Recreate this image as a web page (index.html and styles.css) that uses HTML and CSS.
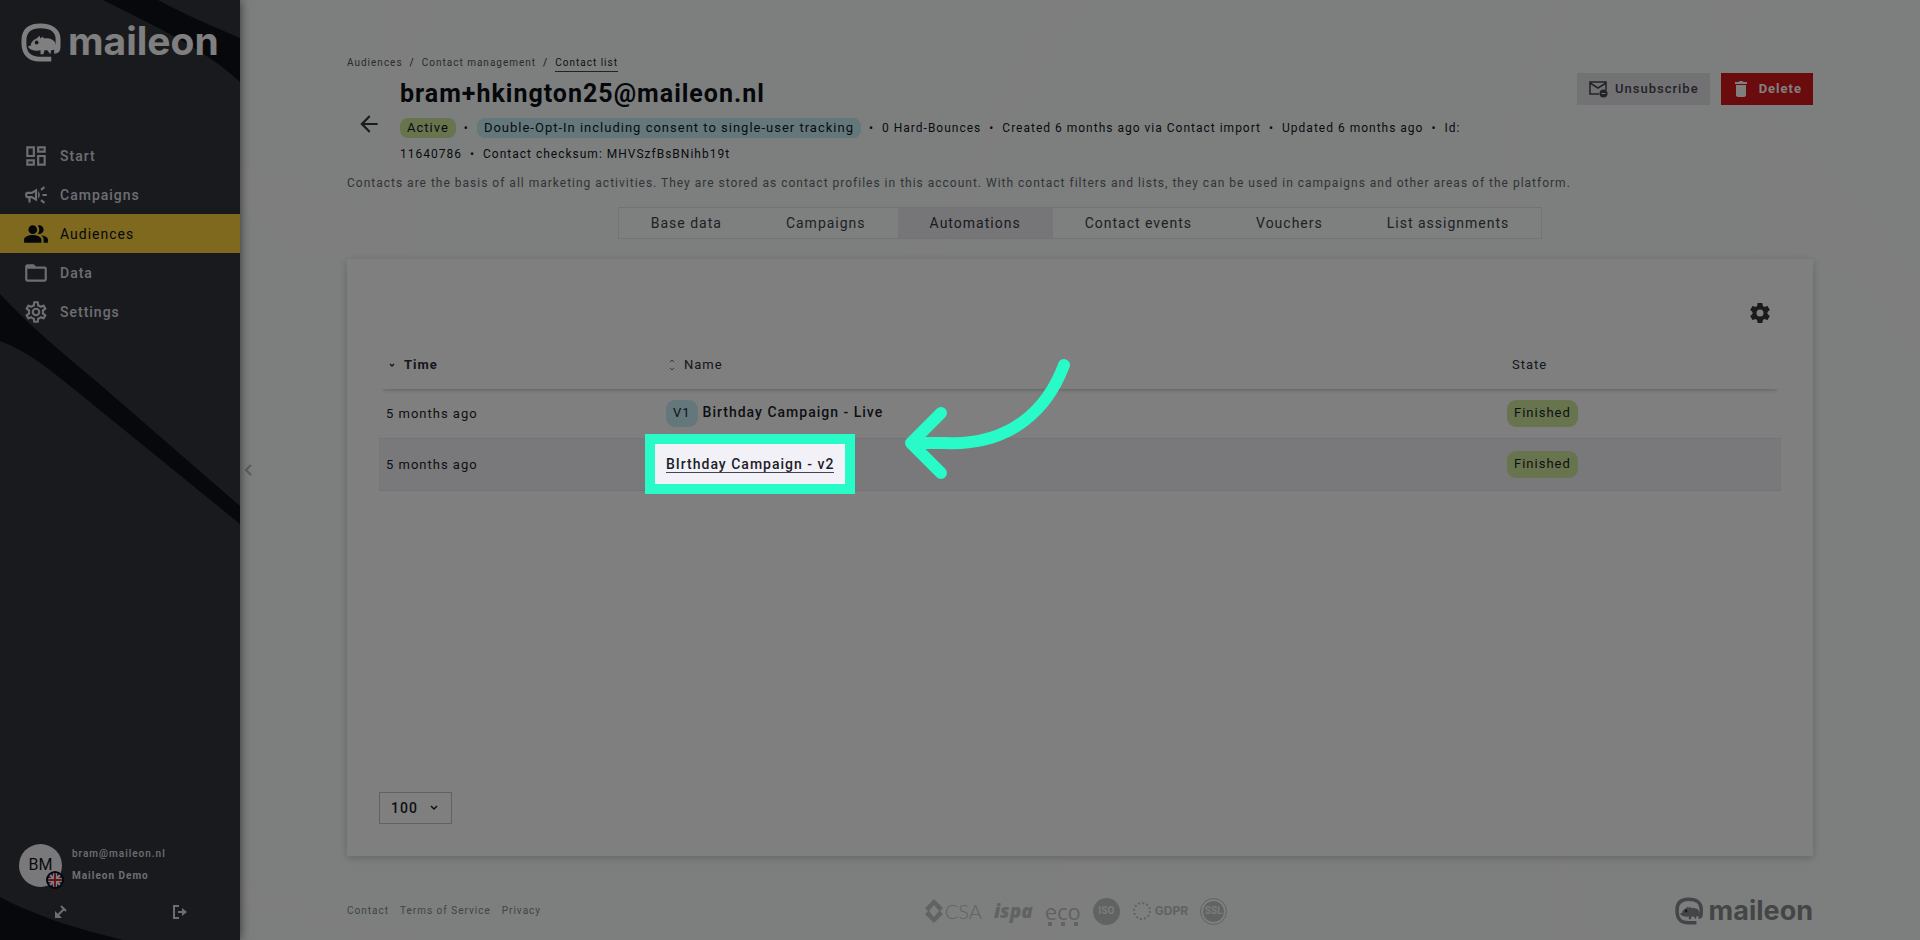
FILE: index.html
```html
<!DOCTYPE html>
<html lang="en">
<head>
<meta charset="utf-8">
<meta name="viewport" content="width=device-width, initial-scale=1">
<title>Contact automations - Maileon</title>
<link rel="stylesheet" href="styles.css">
</head>
<body>
<svg class="sprite" aria-hidden="true">
  <symbol id="chameleon" viewBox="0 0 42 40">
    <path d="M31 37H19C8 37 3 30 3 21v-3C3 8 9 3 20 3s18 5 18 14v7c0 3-1 5-4 5" fill="none" stroke="currentColor" stroke-width="5"/>
    <path d="M10 23c0-3 3-6 6-7l3-3 1 3 2-2 2 2c5-1 9 1 11 4l2 7-6 1-1 4-3-4h-3l-1 4-3 0 0-4c-4 1-11 0-13-4z" fill="currentColor"/>
    <circle class="eye" cx="16" cy="20" r="2"/>
  </symbol>
</svg>
<div class="app">
  <aside class="sidebar">
    <svg class="sidebar-art" viewBox="0 0 240 940" preserveAspectRatio="none" aria-hidden="true">
      <path d="M103 0h55c28 15 54 26 82 38v44C204 48 150 24 103 0z"/>
      <path d="M0 294c30 32 62 59 96 87l144 125v18L80 394C50 370 28 351 0 341z"/>
      <path d="M0 897c38 20 78 32 123 43H0z"/>
    </svg>
    <a class="logo" href="#" aria-label="maileon"><svg class="logo-mark" aria-hidden="true"><use href="#chameleon"/></svg><span class="logo-text">maileon</span></a>
    <nav class="nav" aria-label="Main">
      <a class="nav-item" href="#"><svg class="icon" viewBox="0 0 24 24"><path d="M19 5v2h-4V5h4M9 5v6H5V5h4m10 8v6h-4v-6h4M9 17v2H5v-2h4M21 3h-8v6h8V3zM11 3H3v10h8V3zm10 8h-8v10h8V11zm-10 4H3v6h8v-6z"/></svg>Start</a>
      <a class="nav-item" href="#"><svg class="icon" viewBox="0 0 24 24"><path d="M18 11v2h4v-2h-4zM16 17.61l3.200 2.390 1.200-1.600-3.200-2.400-1.200 1.610zM20.400 5.600L19.200 4 16 6.400 17.200 8l3.200-2.400zM4 9c-1.100 0-2 .9-2 2v2c0 1.100.9 2 2 2h1v4h2v-4h1l5 3V6L8 9H4zm5.030 1.710L11 9.530v4.940l-1.970-1.180-.48-.29H4v-2h4.550l.48-.29zM15.500 12c0-1.330-.58-2.530-1.500-3.350v6.690c.92-.81 1.500-2.010 1.500-3.340z"/></svg>Campaigns</a>
      <a class="nav-item nav-item-active" href="#" aria-current="page"><svg class="icon" viewBox="0 0 24 24"><path d="M16.670 13.130C18.040 14.060 19 15.320 19 17v3h4v-3c0-2.180-3.570-3.470-6.330-3.870zM15 12c2.210 0 4-1.790 4-4s-1.790-4-4-4c-.47 0-.91.1-1.330.24C14.500 5.270 15 6.580 15 8s-.5 2.730-1.330 3.760c.42.14.86.24 1.330.24zM9 12a4 4 0 1 0 0-8 4 4 0 0 0 0 8zm0 1c-2.670 0-8 1.340-8 4v3h16v-3c0-2.660-5.330-4-8-4z"/></svg>Audiences</a>
      <a class="nav-item" href="#"><svg class="icon" viewBox="0 0 24 24"><path d="M20 18H4V8h16m0-2h-8l-2-2H4c-1.110 0-2 .89-2 2v12a2 2 0 0 0 2 2h16a2 2 0 0 0 2-2V8a2 2 0 0 0-2-2z"/></svg>Data</a>
      <a class="nav-item" href="#"><svg class="icon" viewBox="0 0 24 24"><path d="M12 8a4 4 0 0 1 4 4 4 4 0 0 1-4 4 4 4 0 0 1-4-4 4 4 0 0 1 4-4m0 2a2 2 0 0 0-2 2 2 2 0 0 0 2 2 2 2 0 0 0 2-2 2 2 0 0 0-2-2m-2 12c-.25 0-.46-.18-.5-.42l-.37-2.650c-.63-.25-1.170-.59-1.690-.99l-2.490 1.010c-.22.08-.49 0-.61-.22l-2-3.460a.493.493 0 0 1 .12-.64l2.110-1.660L4.500 12l.07-1-2.110-1.630a.493.493 0 0 1-.12-.64l2-3.460c.12-.22.39-.31.61-.22l2.490 1c.52-.39 1.060-.73 1.690-.98l.37-2.650c.04-.24.25-.42.5-.42h4c.25 0 .46.18.5.42l.37 2.650c.63.25 1.170.59 1.690.98l2.490-1c.22-.09.49 0 .61.22l2 3.460c.13.22.07.49-.12.64L19.430 11l.07 1-.07 1 2.110 1.630c.19.15.25.42.12.64l-2 3.460c-.12.22-.39.31-.61.22l-2.490-1c-.52.39-1.060.73-1.690.98l-.37 2.650c-.04.24-.25.42-.5.42h-4m1.250-18l-.37 2.610c-1.200.25-2.260.89-3.030 1.780L5.440 7.350l-.75 1.300L6.800 10.200a5.550 5.550 0 0 0 0 3.600l-2.120 1.560.75 1.300 2.430-1.040c.77.88 1.820 1.520 3.010 1.760l.37 2.620h1.520l.37-2.610c1.190-.25 2.240-.89 3.010-1.770l2.430 1.040.75-1.300-2.120-1.550c.4-1.170.4-2.440 0-3.610l2.110-1.550-.75-1.300-2.410 1.040a5.420 5.420 0 0 0-3.030-1.770L12.750 4h-1.500z"/></svg>Settings</a>
    </nav>
    <div class="account">
      <div class="user">
        <div class="avatar">BM
          <svg class="flag" viewBox="0 0 18 18" role="img" aria-label="English"><circle class="flag-rim" cx="9" cy="9" r="9"/><clipPath id="flag-clip"><circle cx="9" cy="9" r="7"/></clipPath><g clip-path="url(#flag-clip)"><path fill="#3c4c9c" d="M0 0h18v18H0z"/><path stroke="#fff" stroke-width="2" d="M2 2l14 14M16 2L2 16"/><path stroke="#fff" stroke-width="4" d="M9 0v18M0 9h18"/><path stroke="#e0232f" stroke-width="2" d="M9 0v18M0 9h18"/></g></svg>
        </div>
        <div class="user-lines"><span>bram@maileon.nl</span><strong>Maileon Demo</strong></div>
      </div>
      <div class="account-actions">
        <button class="icon-button" type="button" aria-label="Switch account"><svg class="icon-small" viewBox="0 0 14 14"><path d="M4 10l6-6M7 1l5 5" fill="none" stroke="currentColor" stroke-width="2"/><path d="M1 6v7h7z"/></svg></button>
        <button class="icon-button" type="button" aria-label="Log out"><svg class="icon-small" viewBox="0 0 14 14"><path d="M6 1H1v12h5M5 7h5" fill="none" stroke="currentColor" stroke-width="2"/><path d="M9 3l5 4-5 4z"/></svg></button>
      </div>
    </div>
  </aside>

  <main class="main">
    <svg class="main-art" viewBox="0 0 1680 940" preserveAspectRatio="none" aria-hidden="true">
      <path d="M0 165c60 22 120 32 160 60v33H60C40 240 20 225 0 210z"/>
      <path d="M150 0h40c-10 60-16 130-20 258h-60c30-80 42-150 40-258z"/>
      <path d="M805 0h45C790 90 740 170 700 258h-40C720 180 770 90 805 0z"/>
      <path d="M1310 50l30-50h-30c-30 90-50 140-60 206l30 52c-20-80 0-150 30-208z"/>
      <path d="M1460 0h60c-20 20-20 60 20 120 40 60 90 90 140 160v80c-60-80-110-130-170-100 30-60 20-140-50-260z"/>
      <path d="M0 880c70 30 130 40 190 60H120C80 925 40 915 0 905z"/>
      <path d="M830 860h50l-60 80h-50zM1320 860c20 30 30 50 35 80h-45z"/>
    </svg>
    <button class="collapse" type="button" aria-label="Collapse sidebar"><svg class="collapse-icon" viewBox="0 0 8 12"><path d="M7 1L2 6l5 5" fill="none" stroke="currentColor" stroke-width="2"/></svg></button>

    <nav class="crumbs" aria-label="Breadcrumb"><a href="#">Audiences</a><span class="slash">/</span><a href="#">Contact management</a><span class="slash">/</span><a class="crumb-current" href="#" aria-current="page">Contact list</a></nav>

    <header class="head">
      <a class="back" href="#" aria-label="Back"><svg class="icon" viewBox="0 0 24 24"><path d="M20 11H7.830l5.590-5.590L12 4l-8 8 8 8 1.410-1.410L7.830 13H20v-2z"/></svg></a>
      <div class="head-text">
        <h1 class="title">bram+hkington25@maileon.nl</h1>
        <p class="meta"><span class="tag tag-green">Active</span><span class="dot">•</span><span class="tag tag-blue">Double-Opt-In including consent to single-user tracking</span><span class="dot">•</span><span>0 Hard-Bounces</span><span class="dot">•</span><span>Created 6 months ago via Contact import</span><span class="dot">•</span><span>Updated 6 months ago</span><span class="dot">•</span><span>Id:</span> <span>11640786</span><span class="dot">•</span><span>Contact checksum: MHVSzfBsBNihb19t</span></p>
      </div>
      <div class="actions">
        <button class="button button-grey" type="button"><svg class="mail-icon" viewBox="0 0 20 18"><path d="M11 14H2V2h16v8M2 3l8 5 8-5" fill="none" stroke="currentColor" stroke-width="1.500"/><circle cx="15.500" cy="13.500" r="4"/><path d="M13.500 13.500h4" stroke="#e5e4ea" stroke-width="1"/></svg>Unsubscribe</button>
        <button class="button button-red" type="button"><svg class="trash-icon" viewBox="0 0 12 16"><path d="M0 1h3.500l1-1h3l1 1H12v2H0zM1 4h10v10c0 1-1 2-2 2H3c-1 0-2-1-2-2z"/></svg>Delete</button>
      </div>
    </header>
    <p class="intro">Contacts are the basis of all marketing activities. They are stored as contact profiles in this account. With contact filters and lists, they can be used in campaigns and other areas of the platform.</p>

    <nav class="tabs" aria-label="Contact sections">
      <a class="tab" href="#">Base data</a><a class="tab" href="#">Campaigns</a><a class="tab tab-active" href="#" aria-current="page">Automations</a><a class="tab" href="#">Contact events</a><a class="tab" href="#">Vouchers</a><a class="tab" href="#">List assignments</a>
    </nav>

    <section class="card">
      <div class="card-top"><button class="icon-button" type="button" aria-label="Table settings"><svg class="gear" viewBox="0 0 24 24"><path d="M12 15.500A3.500 3.500 0 0 1 8.500 12 3.500 3.500 0 0 1 12 8.500a3.500 3.500 0 0 1 3.500 3.500 3.500 3.500 0 0 1-3.500 3.500m7.430-2.530c.04-.32.07-.64.07-.97 0-.33-.03-.66-.07-1l2.110-1.630c.19-.15.24-.42.12-.64l-2-3.460c-.12-.22-.39-.31-.61-.22l-2.490 1c-.52-.39-1.060-.73-1.690-.98l-.37-2.650A.506.506 0 0 0 14 2h-4c-.25 0-.46.18-.5.42l-.37 2.650c-.63.25-1.170.59-1.690.98l-2.490-1c-.22-.09-.49 0-.61.22l-2 3.460c-.13.22-.07.49.12.64L4.570 11c-.04.34-.07.67-.07 1 0 .33.03.65.07.97l-2.110 1.660c-.19.15-.25.42-.12.64l2 3.460c.12.22.39.3.61.22l2.490-1.010c.52.4 1.060.74 1.690.99l.37 2.650c.04.24.25.42.5.42h4c.25 0 .46-.18.5-.42l.37-2.650c.63-.26 1.170-.59 1.690-.99l2.490 1.010c.22.08.49 0 .61-.22l2-3.460c.12-.22.07-.49-.12-.64l-2.110-1.660z"/></svg></button></div>
      <table class="table">
        <colgroup><col class="col-time"><col class="col-name"><col class="col-state"></colgroup>
        <thead><tr>
          <th class="sorted" scope="col" aria-sort="descending"><svg class="sort-icon" viewBox="0 0 8 14"><path d="M2 6l2 2 2-2" fill="none" stroke="currentColor" stroke-width="1.500"/></svg>Time</th>
          <th scope="col"><svg class="sort-icon sort-icon-idle" viewBox="0 0 8 14"><path d="M2 4l2-2 2 2M2 10l2 2 2-2" fill="none" stroke="currentColor"/></svg>Name</th>
          <th scope="col"><span class="state-label">State</span></th>
        </tr></thead>
        <tbody>
          <tr>
            <td>5 months ago</td>
            <td><span class="pill pill-blue">V1</span><a class="name" href="#">Birthday Campaign - Live</a></td>
            <td><span class="pill pill-green">Finished</span></td>
          </tr>
          <tr class="row-hover">
            <td>5 months ago</td>
            <td><span class="focus"><a class="name name-hover" href="#">BIrthday Campaign - v2</a><span class="spotlight"></span><svg class="pointer" viewBox="0 0 170 126" aria-hidden="true"><path d="M162 9C146 52 110 90 43 87H9M39 57L9 87l30 30" fill="none" stroke="currentColor" stroke-width="12" stroke-linecap="round" stroke-linejoin="round"/></svg></span></td>
            <td><span class="pill pill-green">Finished</span></td>
          </tr>
        </tbody>
      </table>
      <div class="card-bottom">
        <div class="select"><select class="select-field" aria-label="Rows per page"><option>100</option></select><svg class="select-icon" viewBox="0 0 8 6" aria-hidden="true"><path d="M1 1l3 3 3-3" fill="none" stroke="currentColor" stroke-width="1.500"/></svg></div>
      </div>
    </section>

    <footer class="footer">
      <nav class="footer-links" aria-label="Legal"><a href="#">Contact</a><a href="#">Terms of Service</a><a href="#">Privacy</a></nav>
      <div class="seals">
        <span class="seal seal-csa"><svg class="diamond" viewBox="0 0 18 24"><path fill-rule="evenodd" d="M9 0l9 9-3 3 3 3-9 9-9-9 3-3-3-3zM9 6l-5 6 5 6 5-6z"/></svg>CSA</span>
        <span class="seal seal-ispa">ispa</span>
        <span class="seal seal-eco">eco<svg class="eco-dots" viewBox="0 0 30 4"><path d="M0 0h4v4H0zM13 0h4v4h-4zM26 0h4v4h-4z"/></svg></span>
        <span class="seal seal-iso">ISO</span>
        <span class="seal seal-gdpr"><svg class="stars" viewBox="0 0 20 20"><circle cx="10" cy="10" r="8" fill="none" stroke="currentColor" stroke-width="2" stroke-dasharray="2 2.190"/></svg>GDPR</span>
        <span class="seal seal-ssl">SSL</span>
      </div>
      <a class="logo logo-footer" href="#" aria-label="maileon"><svg class="logo-mark" aria-hidden="true"><use href="#chameleon"/></svg><span class="logo-text">maileon</span></a>
    </footer>
  </main>
</div>
</body>
</html>
```

FILE: styles.css
```css
* { box-sizing: border-box; }
body {
  margin: 0;
  background: #f9fefc;
  color: #1c1e28;
  font: 14px/20px Roboto, sans-serif;
  letter-spacing: 1px;
}
a { color: inherit; text-decoration: none; }
button { font: inherit; letter-spacing: inherit; cursor: pointer; }
svg { display: block; flex: none; fill: currentColor; }
h1, p { margin: 0; }
.sprite { position: absolute; width: 0; height: 0; }

.app { display: flex; min-height: 100vh; isolation: isolate; }

/* Sidebar */
.sidebar {
  position: relative;
  z-index: 1;
  flex: none;
  display: flex;
  flex-direction: column;
  width: 240px;
  background: #32343c;
  color: #dcdce0;
  box-shadow: 0 0 10px rgba(0, 0, 0, 0.6);
}
.sidebar-art { position: absolute; inset: 0; z-index: -1; width: 100%; height: 100%; fill: #0e1018; }
.logo { display: flex; align-items: flex-start; gap: 6px; }
.sidebar .logo { padding: 23px 0 0 21px; color: #fff; }
.logo-mark { width: 41px; height: 39px; }
.eye { fill: #32343c; }
.logo-text { font: 700 39px/40px Inter, sans-serif; letter-spacing: 0; }
.sidebar .logo-text { line-height: 36px; }
.nav { display: flex; flex-direction: column; padding-top: 74px; }
.nav-item { display: flex; align-items: center; gap: 11px; height: 39px; padding-left: 23px; font-weight: 500; }
.nav-item-active { background: #fcd23e; color: #0d0f17; font-weight: 400; }
.icon { width: 26px; height: 26px; }
.account { margin-top: auto; padding: 0 19px 21px; }
.user { display: flex; align-items: center; gap: 10px; font-size: 10px; line-height: 22px; }
.user-lines { display: flex; flex-direction: column; font-weight: 500; }
.user-lines strong { font-weight: 700; }
.avatar {
  position: relative;
  display: flex;
  align-items: center;
  justify-content: center;
  width: 43px;
  height: 43px;
  border-radius: 50%;
  background: #f2f1f7;
  color: #14151c;
  font-size: 16px;
  letter-spacing: 0;
}
.flag { position: absolute; right: -2px; bottom: -2px; width: 18px; height: 18px; }
.flag-rim { fill: #0d0f17; }
.account-actions { display: flex; justify-content: space-between; padding: 18px 34px 0 35px; }
.icon-button { display: block; padding: 0; border: 0; background: none; color: inherit; }
.icon-small { width: 14px; height: 14px; }

/* Main column */
.main {
  position: relative;
  flex: 1;
  display: flex;
  flex-direction: column;
  min-width: 0;
  padding: 53px 107px 0;
}
.main-art { position: absolute; inset: 0; z-index: -1; width: 100%; height: 100%; fill: #fffdfd; }
.collapse { position: absolute; left: 4px; top: 50%; padding: 0; border: 0; margin-top: -6px; background: none; color: #b8b9bb; }
.collapse-icon { width: 8px; height: 12px; }
.crumbs { display: flex; gap: 7px; font-size: 10px; line-height: 20px; color: #55565c; }
.slash { color: #1c1e28; }
.crumb-current { height: 19px; border-bottom: 1px solid #44454c; color: #1c1e28; }
.head { display: flex; align-items: flex-start; }
.back { padding: 38px 18px 0 9px; width: 53px; color: #34363c; }
.head-text { flex: 1; padding: 6px 80px 0 0; }
.title { font-size: 25px; font-weight: 700; line-height: 30px; color: #0d0f17; }
.meta { padding-top: 6px; font-size: 12px; line-height: 26px; color: #14151f; }
.tag { padding: 2px 7px 3px; border-radius: 8px; font-size: 13px; }
.tag-green, .pill-green { background: #cfe89c; }
.tag-blue, .pill-blue { background: #c8eef6; }
.dot { padding: 0 8px; }
.actions { display: flex; gap: 11px; }
.button { display: flex; align-items: center; height: 32px; border: 0; font-size: 13px; font-weight: 500; }
.button-grey { gap: 7px; padding: 0 11px; background: #e5e4ea; color: #44464e; }
.button-red { gap: 12px; padding: 0 11px 0 14px; background: #d4161a; color: #fff; font-weight: 700; }
.mail-icon { width: 20px; height: 18px; }
.trash-icon { width: 12px; height: 16px; }
.intro { padding-top: 6px; font-size: 12px; line-height: 20px; color: #66686e; }
.tabs { display: flex; align-self: center; margin-top: 14px; border: 1px solid #e6e5ea; background: rgba(255, 255, 255, 0.6); color: #40424a; }
.tab { padding: 5px 32px; }
.tab-active { background: #ecebf1; color: #34363e; }

/* Card and table */
.card {
  flex: 1;
  display: flex;
  flex-direction: column;
  margin-top: 20px;
  padding: 42px 32px 32px;
  background: #fff;
  box-shadow: 0 2px 8px rgba(0, 0, 0, 0.2);
}
.card-top { display: flex; justify-content: flex-end; padding-right: 9px; color: #34363a; }
.gear { width: 24px; height: 24px; }
.table { width: 100%; margin-top: 16px; border-spacing: 0; table-layout: fixed; }
.col-time { width: 280px; }
.col-state { width: 281px; }
.table th { height: 48px; padding: 0 7px; text-align: left; font-size: 13px; font-weight: 400; color: #2c2e36; vertical-align: middle; }
.table thead { box-shadow: 0 5px 4px -4px rgba(0, 0, 0, 0.25); }
.table .sorted { font-weight: 700; }
.sort-icon { display: inline-block; width: 8px; height: 14px; margin: 0 8px 0 2px; vertical-align: -3px; }
.sort-icon-idle { color: #70727a; }
.state-label { padding-left: 5px; }
.table td { height: 49px; padding: 0 7px; font-size: 13px; }
.table .row-hover td { height: 53px; background: #f2f1f7; border: solid #e8e7ee; border-width: 1px 0; }
.pill { display: inline-block; padding: 3px 7px 4px; border-radius: 9px; }
.pill-blue { margin-right: 5px; }
.name { font-size: 14px; font-weight: 500; }
.name-hover { border-bottom: 1px solid #44454c; }

/* Guided-tour highlight: a ring whose spread shadow dims the rest of the page */
.focus { position: relative; z-index: 5; display: inline-block; }
.spotlight {
  position: absolute;
  inset: -20px -21px -19px;
  border: 10px solid #28fac8;
  box-shadow: 0 0 0 3000px rgba(0, 0, 0, 0.5);
  pointer-events: none;
}
.pointer { position: absolute; left: 100%; top: -98px; width: 170px; height: 126px; margin-left: 68px; color: #28fac8; pointer-events: none; }

.card-bottom { margin-top: auto; display: flex; }
.select { display: flex; align-items: center; width: 73px; border: 1px solid #c4c4ca; }
.select-field { width: 100%; height: 30px; padding: 0 0 0 11px; border: 0; appearance: none; background: none; color: #1c1e28; font: 500 14px/20px Roboto, sans-serif; letter-spacing: 1px; }
.select-icon { width: 8px; height: 6px; margin-right: 13px; }

/* Footer */
.footer { display: grid; grid-template-columns: 1fr auto 1fr; align-items: center; height: 84px; padding-top: 26px; }
.footer-links { display: flex; gap: 11px; font-size: 10px; color: #84868a; }
.seals { display: flex; align-items: center; gap: 12px; padding-right: 8px; color: #c2c4c4; letter-spacing: 0; }
.seal { display: flex; align-items: center; }
.seal-csa { font: 300 20px/24px Lato, sans-serif; gap: 2px; }
.diamond { width: 18px; height: 24px; }
.seal-ispa { font: italic 800 19px/24px "Open Sans", sans-serif; }
.seal-eco { position: relative; font: 22px/24px "Open Sans", sans-serif; }
.eco-dots { position: absolute; left: 3px; bottom: -3px; width: 30px; height: 4px; }
.seal-iso, .seal-ssl { justify-content: center; width: 27px; height: 27px; border-radius: 50%; background: #c2c4c4; color: #f4f6f6; font-size: 10px; font-weight: 700; }
.seal-ssl { border: 1px solid #c2c4c4; background-clip: content-box; padding: 2px; }
.seal-gdpr { gap: 3px; font: 700 12px/24px Inter, sans-serif; }
.stars { width: 20px; height: 20px; }
.logo-footer { justify-self: end; align-items: center; gap: 5px; color: #8a8b91; }
.logo-footer .logo-mark { width: 29px; height: 28px; }
.logo-footer .logo-text { font-size: 27px; line-height: 26px; }
```
